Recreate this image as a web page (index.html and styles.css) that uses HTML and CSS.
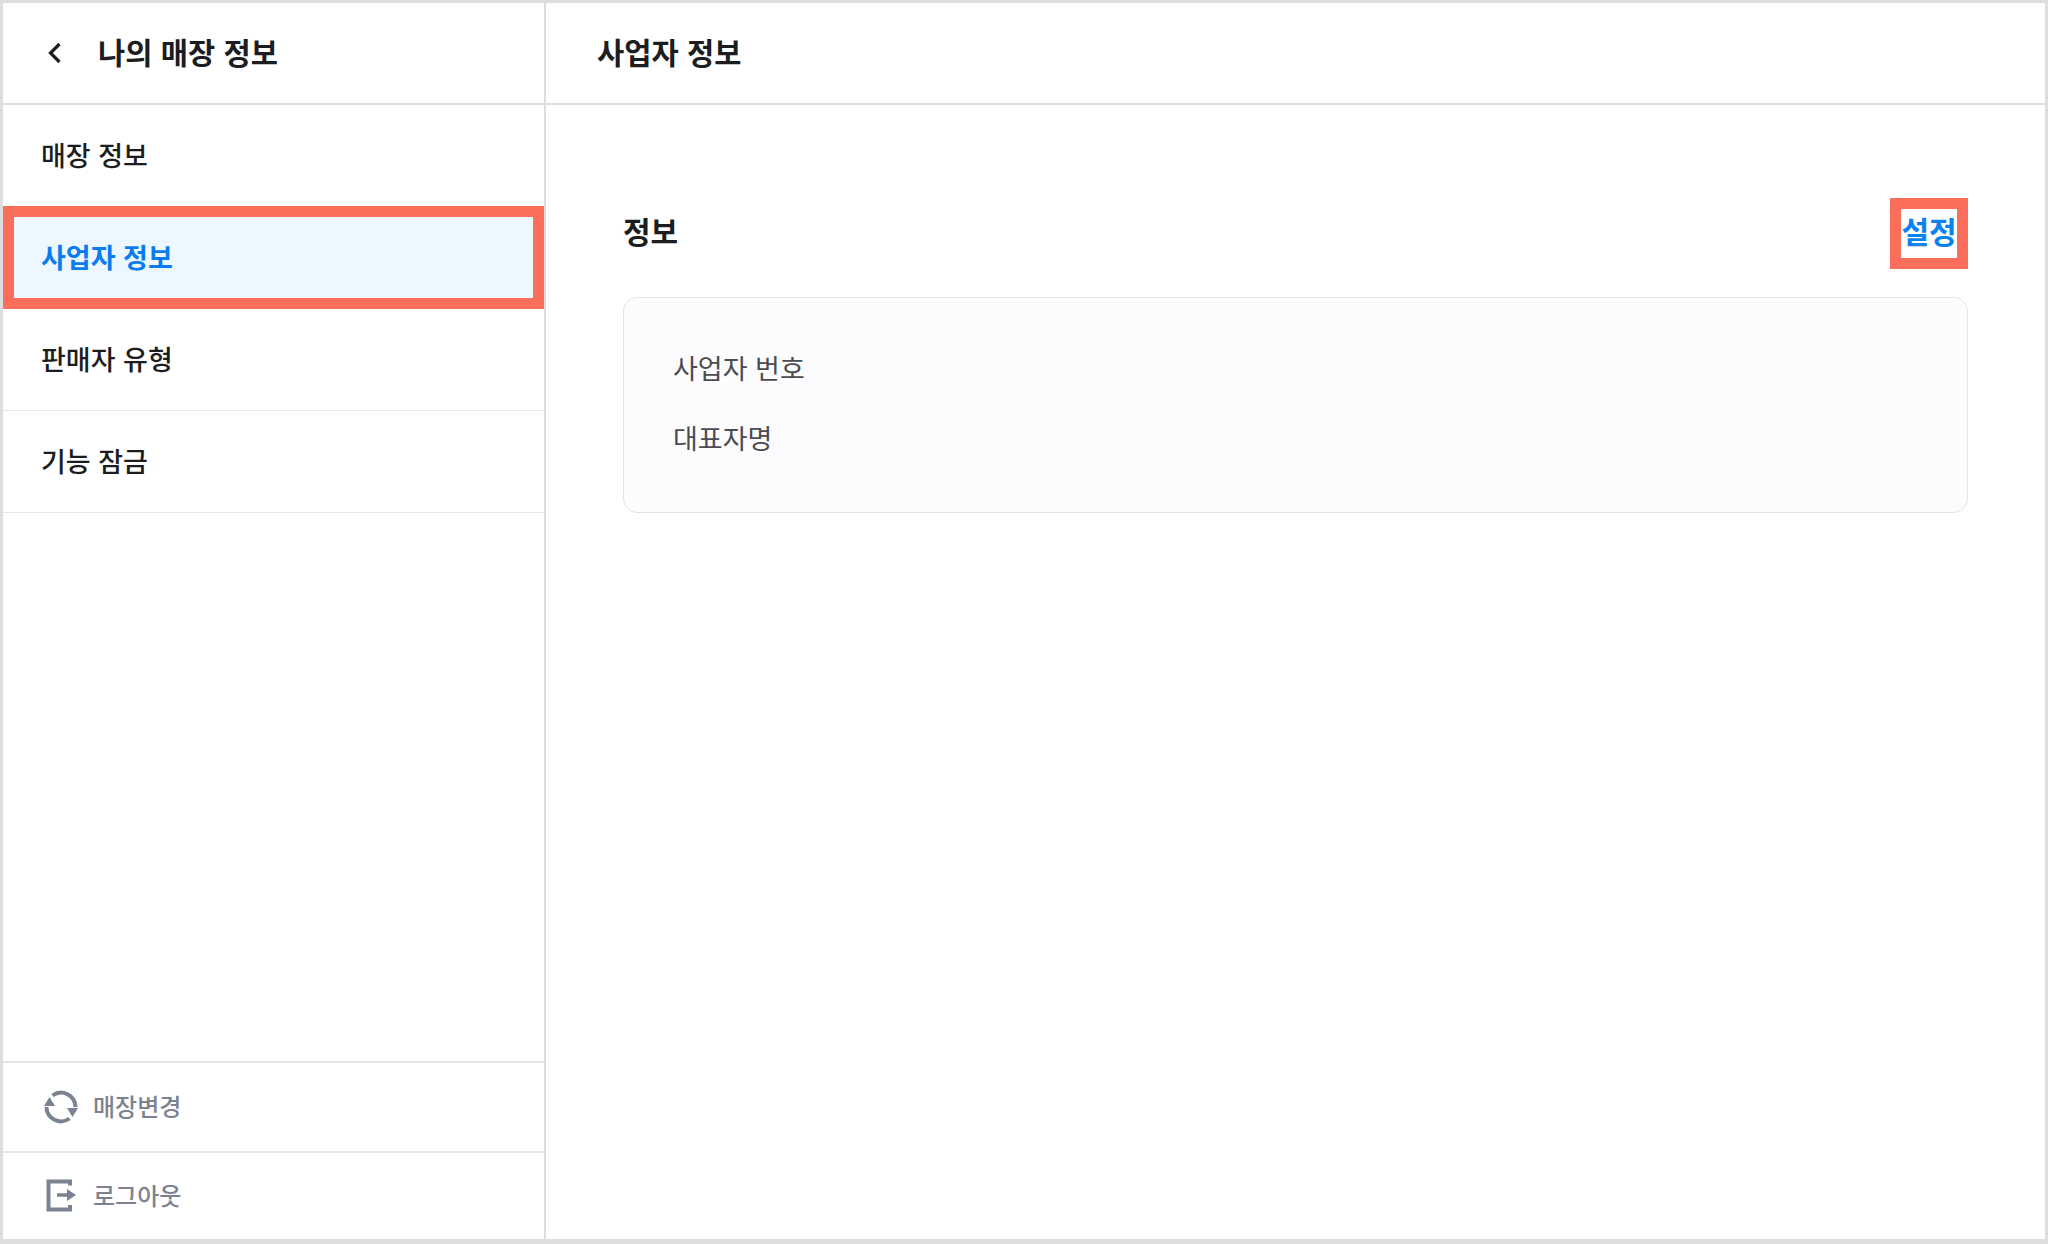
FILE: index.html
```html
<!DOCTYPE html>
<html lang="ko">
<head>
	<meta charset="UTF-8">
	<title>나의 매장 정보</title>
	<link rel="stylesheet" href="styles.css">
</head>
<body>
	<div class="frame">
		<aside class="side">
			<div class="side-head">
				<svg class="back" width="16" height="22" viewBox="0 0 16 22"><path d="M13.500 2 4.500 11l9 9" fill="none" stroke="#1c1d20" stroke-width="3.200"/></svg>
				<h1>나의 매장 정보</h1>
			</div>
			<ul class="menu">
				<li>매장 정보</li>
				<li class="on">사업자 정보</li>
				<li>판매자 유형</li>
				<li>기능 잠금</li>
			</ul>
			<div class="side-foot">
				<div class="foot-row">
					<svg width="36" height="36" viewBox="0 0 36 36"><path d="M9.500 6.500A14.500 14.500 0 0 1 32.500 18M26.500 29.500A14.500 14.500 0 0 1 3.500 18" fill="none" stroke="#7b8291" stroke-width="4"/><path d="M6.500 8 12 17H1zM29.500 28 24 19h11z" fill="#7b8291"/></svg>
					<span>매장변경</span>
				</div>
				<div class="foot-row last">
					<svg width="36" height="36" viewBox="0 0 36 36"><path d="M27 8.500V4.500H5.500v28H27v-4.500" fill="none" stroke="#7b8291" stroke-width="4"/><path d="M14 18h11" stroke="#7b8291" stroke-width="3.500"/><path d="M24 12 33 18l-9 6z" fill="#7b8291"/></svg>
					<span>로그아웃</span>
				</div>
			</div>
		</aside>
		<main class="content">
			<div class="content-head">
				<h2>사업자 정보</h2>
			</div>
			<section class="info">
				<div class="info-head">
					<h3>정보</h3>
					<a class="edit" href="javascript:void(0)">설정</a>
				</div>
				<div class="card">
					<p>사업자 번호</p>
					<p>대표자명</p>
				</div>
			</section>
		</main>
	</div>
</body>
</html>
```

FILE: styles.css
```css
html,body,h1,h2,h3,p,ul,li{
	margin: 0;
	padding: 0;
}
ul{
	list-style-type: none;
}
body{
	width: 2048px;
	height: 1244px;
	background: #ddd;
	font-family: "Noto Sans CJK KR", "Noto Sans", sans-serif;
	color: #1c1d20;
	overflow: hidden;
}
.frame{
	display: flex;
	box-sizing: border-box;
	width: 2042px;
	height: 1236px;
	margin: 3px 3px 5px;
	background: #fff;
}
.side{
	display: flex;
	flex-direction: column;
	box-sizing: border-box;
	width: 543px;
	border-right: 2px solid #ddd;
}
.side-head{
	display: flex;
	align-items: center;
	box-sizing: border-box;
	height: 102px;
	padding-left: 43px;
	border-bottom: 2px solid #ddd;
}
.back{
	margin-right: 36px;
}
.side-head h1{
	padding-bottom: 2px;
	font-size: 29.600px;
	font-weight: 700;
	line-height: 1;
}
.menu li{
	display: flex;
	align-items: center;
	box-sizing: border-box;
	height: 102px;
	padding-left: 38px;
	padding-bottom: 2px;
	font-size: 27px;
	font-weight: 500;
	border-bottom: 1px solid #e6e6e6;
}
.menu li.on{
	height: 103px;
	margin-top: -1px;
	padding-left: 27px;
	color: #0a7cf0;
	font-weight: 700;
	background: #edf7ff;
	border: 11px solid #fb6e5c;
}
.side-foot{
	margin-top: auto;
}
.foot-row{
	display: flex;
	align-items: center;
	gap: 14px;
	box-sizing: border-box;
	height: 90px;
	padding-left: 40px;
	color: #7b8291;
	font-size: 24px;
	font-weight: 500;
	border-top: 2px solid #e6e6e6;
}
.foot-row.last{
	height: 88px;
}
.foot-row span{
	margin-bottom: 3px;
}
.foot-row.last svg{
	margin-bottom: 3px;
}
.content{
	flex: 1;
}
.content-head{
	display: flex;
	align-items: center;
	box-sizing: border-box;
	height: 102px;
	padding-left: 51px;
	border-bottom: 2px solid #ddd;
}
.content-head h2{
	padding-bottom: 2px;
	font-size: 29.600px;
	font-weight: 700;
	line-height: 1;
}
.info{
	padding: 93px 77px 0;
}
.info-head{
	display: flex;
	justify-content: space-between;
	align-items: center;
	height: 71px;
	margin-bottom: 28px;
}
.info-head h3{
	padding-bottom: 8px;
	font-size: 30px;
	font-weight: 700;
}
.edit{
	box-sizing: border-box;
	width: 78px;
	height: 71px;
	line-height: 43px;
	text-align: center;
	font-size: 30px;
	font-weight: 700;
	color: #0a82f0;
	text-decoration: none;
	border: 11px solid #fb6e5c;
	white-space: nowrap;
}
.card{
	box-sizing: border-box;
	height: 216px;
	padding: 50px 49px 0;
	background: #fcfcfe;
	border: 1px solid #e4e4e6;
	border-radius: 14px;
}
.card p{
	height: 70px;
	line-height: 40px;
	font-size: 27px;
	color: #4a4c52;
}
```
